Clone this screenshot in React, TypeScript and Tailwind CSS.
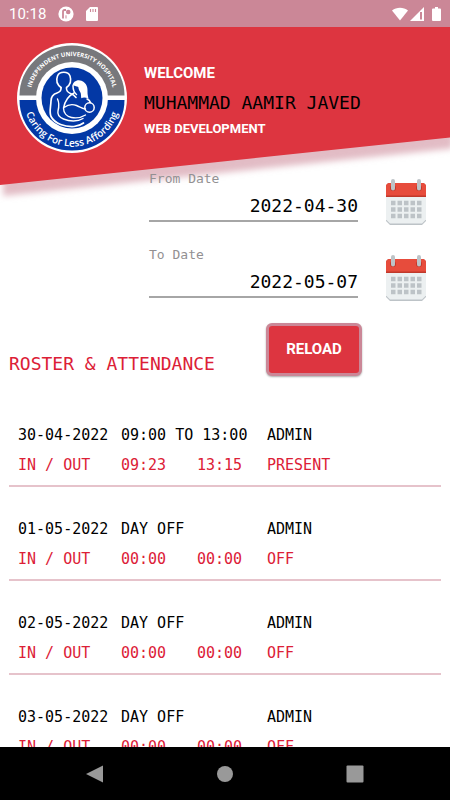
import type { ReactNode } from 'react'

type Entry = {
  date: string
  shift: string
  timeIn: string
  timeOut: string
  department: string
  status: string
}

const entries: Entry[] = [
  { date: '30-04-2022', shift: '09:00 TO 13:00', timeIn: '09:23', timeOut: '13:15', department: 'ADMIN', status: 'PRESENT' },
  { date: '01-05-2022', shift: 'DAY OFF', timeIn: '00:00', timeOut: '00:00', department: 'ADMIN', status: 'OFF' },
  { date: '02-05-2022', shift: 'DAY OFF', timeIn: '00:00', timeOut: '00:00', department: 'ADMIN', status: 'OFF' },
  { date: '03-05-2022', shift: 'DAY OFF', timeIn: '00:00', timeOut: '00:00', department: 'ADMIN', status: 'OFF' },
]

function StatusBar() {
  return (
    <div className="flex h-[27px] shrink-0 items-center justify-between bg-[#cb8797] px-[9px] font-[Roboto,sans-serif] text-[15px] text-white">
      <div className="flex items-center gap-3">
        <span className="mt-px">10:18</span>
        <svg width="16" height="16" viewBox="0 0 16 16" aria-hidden="true">
          <circle cx="8" cy="8" r="7.6" fill="#fff" />
          <path d="M5 12.500V5.500q0-1.500 1.500-1.500H8" fill="none" stroke="#cb8797" strokeWidth="1.800" />
          <path d="M8 9.300V12.500" fill="none" stroke="#cb8797" strokeWidth="1" />
          <circle cx="10.200" cy="6" r="2.300" fill="#cb8797" />
        </svg>
        <svg width="12" height="14" viewBox="0 0 12 14" aria-hidden="true">
          <path d="M4 0h7a1 1 0 0 1 1 1v12a1 1 0 0 1-1 1H1a1 1 0 0 1-1-1V4z" fill="#fff" />
          <path d="M4.500 2v3M7 2v3M9.500 2v3" stroke="#cb8797" strokeWidth="1.100" />
        </svg>
      </div>
      <div className="flex items-center">
        <svg width="16" height="14" viewBox="0 0 17 14" aria-hidden="true">
          <path d="M0 3.400C4.800-.6 12.200-.6 17 3.400L8.500 14z" fill="#fff" />
        </svg>
        <svg className="ml-0.5" width="14" height="14" viewBox="0 0 14 14" aria-hidden="true">
          <path d="M14 0v14H0z" fill="#fff" />
          <path d="M11 5v7.500" stroke="#cb8797" strokeWidth="2" />
        </svg>
        <svg className="ml-2" width="9" height="14" viewBox="0 0 9 14" aria-hidden="true">
          <path d="M3 0h3v1.500h2a1 1 0 0 1 1 1V13a1 1 0 0 1-1 1H1a1 1 0 0 1-1-1V2.500a1 1 0 0 1 1-1h2z" fill="#fff" />
        </svg>
      </div>
    </div>
  )
}

function HospitalLogo() {
  return (
    <svg className="shrink-0" width="110" height="110" viewBox="0 0 110 110" role="img" aria-label="Independent University Hospital">
      <defs>
        <path id="arc-top" d="M13 55a42 42 0 0 1 84 0" />
        <path id="arc-bottom" d="M6.500 55a48.500 48.500 0 0 0 97 0" />
      </defs>
      <circle cx="55" cy="55" r="55" fill="#fff" />
      <path d="M2.500 52.500a52.500 50 0 0 1 105 0z" fill="#77787c" />
      <path d="M2.500 57a52.500 50.500 0 0 0 105 0z" fill="#0338a5" />
      <circle cx="55" cy="55" r="36" fill="#fff" />
      <circle cx="55" cy="55" r="30.500" fill="#0338a5" />
      <g fill="none" stroke="#fff" strokeLinecap="round" strokeLinejoin="round">
        <path
          d="M44 44.500c-4-3-5-7.500-3.500-11.500 2-4.800 10.500-5 12.500 0 1.500 4.500 0 9-3.500 11.500-.5 3 .5 4.500 4 6 2 .8 4 2 5.500 4"
          strokeWidth="1.600"
        />
        <path d="M44 44.500c.5 3-1 4.500-4 5.500-4.500 1.400-6 3.500-6 8-.2 6-2 11 0 15.500 4 7.500 14 10.500 23 10 4-.5 7-1.500 9.500-3.500" strokeWidth="1.700" />
        <path d="M40.500 56c2 4 1.500 8 .5 12s2 6.500 5.500 8c6 2.600 14 3 19.500-.5" strokeWidth="1.400" />
        <path d="M57 50c-5 2.500-9 7.500-10.500 15M47 64.500c4-3 8.500-3.500 12.500-2 3.500 1.300 6 3.500 9 3.500M46.500 65c0 5 3.500 8.500 8 9.500 5 1 10 0 14-2.500" strokeWidth="1.400" />
        <circle cx="72.500" cy="64.500" r="4.700" strokeWidth="1.500" />
        <path d="M56 43c0 4 1 6.500 3.500 8.500M70 56c2.500 1 3 2 3.500 3.500" strokeWidth="1.500" />
      </g>
      <path d="M55.500 43c0-4.500 5-7 9-5.300 5.500 2.300 6.200 7.300 6 11-.1 3 .8 5.300 1 7.300-2.500-1.600-5-1.800-7.200-.8-.5-2.700 0-4.200-1-6-1.300-2-1.800-3.200-2-5.200-2-.5-4-1.500-5.800-1z" fill="#fff" />
      <text fill="#fff" className="font-['Open_Sans',sans-serif] text-[6px] font-bold">
        <textPath href="#arc-top" startOffset="50%" textAnchor="middle">INDEPENDENT UNIVERSITY HOSPITAL</textPath>
      </text>
      <text fill="#fff" className="font-['Open_Sans',sans-serif] text-[10px] font-semibold">
        <textPath href="#arc-bottom" startOffset="50%" textAnchor="middle">Caring For Less Affording</textPath>
      </text>
    </svg>
  )
}

function CalendarIcon() {
  return (
    <svg width="40" height="46" viewBox="0 0 40 46" aria-hidden="true">
      <path d="M0 20h40v22l-4 4H4l-4-4z" fill="#bdc3c7" />
      <path d="M0 16h40v24.500l-4 4H4l-4-4z" fill="#ecf0f1" />
      <path d="M0 8q0-4 4-4h32q4 0 4 4v10H0z" fill="#c0392b" />
      <path d="M0 8q0-4 4-4h32q4 0 4 4v8.500H0z" fill="#e74c3c" />
      <circle cx="7" cy="9" r="3" fill="#c0392b" />
      <circle cx="33" cy="9" r="3" fill="#c0392b" />
      <path d="M7 2v7.500M33 2v7.500" stroke="#bdc3c7" strokeWidth="4" strokeLinecap="round" />
      {[24, 30.5, 37].map((y) => (
        <path key={y} d={`M5 ${y}h30.500`} stroke="#bdc3c7" strokeWidth="4.500" strokeDasharray="4.500 2" />
      ))}
    </svg>
  )
}

function DateField({ id, label, value }: { id: string; label: string; value: string }) {
  return (
    <div className="flex items-start justify-end pr-6">
      <div className="flex w-[209px] flex-col">
        <label htmlFor={id} className="text-[13px] leading-4 text-[#929092]">{label}</label>
        <input
          id={id}
          type="text"
          readOnly
          defaultValue={value}
          className="mt-1 h-[31px] w-full border-b-2 border-[#a6a6a6] bg-transparent text-right text-[18px] text-black outline-none"
        />
      </div>
      <button type="button" aria-label={`Pick ${label.toLowerCase()}`} className="ml-7 mt-2">
        <CalendarIcon />
      </button>
    </div>
  )
}

function NavButton({ label, children }: { label: string; children: ReactNode }) {
  return (
    <button type="button" aria-label={label} className="flex h-12 w-12 items-center justify-center">
      <svg width="18" height="18" viewBox="0 0 18 18" fill="#999" aria-hidden="true">{children}</svg>
    </button>
  )
}

export default function App() {
  return (
    <div className="flex h-screen flex-col overflow-hidden bg-white font-['Droid_Sans_Mono','DejaVu_Sans_Mono',monospace]">
      <StatusBar />

      <div className="min-h-0 flex-1 overflow-hidden">
        <header className="relative isolate h-[158px]">
          <div className="absolute inset-0 -z-10 drop-shadow-[3px_11px_3px_#cb87978f]">
            <div className="h-full bg-[#dd3540] [clip-path:polygon(0_0,100%_0,100%_70%,0_100%)]" />
          </div>
          <div className="flex gap-[17px] pl-[17px] pt-4">
            <HospitalLogo />
            <div className="pt-5 font-[Roboto,sans-serif] font-bold text-white">
              <p className="text-[15px] leading-5">WELCOME</p>
              <h1 className="mt-2 font-['Droid_Sans_Mono','DejaVu_Sans_Mono',monospace] text-[18px] font-normal leading-6 text-black">
                MUHAMMAD AAMIR JAVED
              </h1>
              <p className="mt-1.5 text-[13px] leading-4">WEB DEVELOPMENT</p>
            </div>
          </div>
        </header>

        <main className="relative -mt-[14px]">
          <div className="flex flex-col gap-[22px]">
            <DateField id="from-date" label="From Date" value="2022-04-30" />
            <DateField id="to-date" label="To Date" value="2022-05-07" />
          </div>

          <div className="mt-[22px] flex items-end pl-[9px]">
            <h2 className="w-[257px] text-[18px] leading-6 text-[#dc2036]">ROSTER &amp; ATTENDANCE</h2>
            <button
              type="button"
              className="h-[53px] w-24 rounded-md border-[3px] border-[#cb8797] bg-[#dd3540] font-[Roboto,sans-serif] text-[15px] font-bold text-white shadow-[0_1px_2px_#0005]"
            >
              RELOAD
            </button>
          </div>

          <div className="mt-[17px] px-[9px]">
            <table className="w-full table-fixed border-collapse text-left text-[15px] leading-[30px]">
              <colgroup>
                <col className="w-[112px]" />
                <col className="w-[76px]" />
                <col className="w-[70px]" />
                <col />
              </colgroup>
              {entries.map((entry) => (
                <tbody key={entry.date} className="border-b-2 border-[#e6c3cb]">
                  <tr className="text-black">
                    <th scope="row" className="pl-[9px] pt-[27px] font-normal">{entry.date}</th>
                    <td colSpan={2} className="whitespace-nowrap pt-[27px]">{entry.shift}</td>
                    <td className="pt-[27px]">{entry.department}</td>
                  </tr>
                  <tr className="text-[#dc2036]">
                    <th scope="row" className="pb-[5px] pl-[9px] font-normal">IN / OUT</th>
                    <td className="pb-[5px]">{entry.timeIn}</td>
                    <td className="pb-[5px]">{entry.timeOut}</td>
                    <td className="pb-[5px]">{entry.status}</td>
                  </tr>
                </tbody>
              ))}
            </table>
          </div>
        </main>
      </div>

      <nav className="flex h-[53px] shrink-0 items-center justify-center gap-[82px] bg-black">
        <NavButton label="Back">
          <path d="M17 .5v17L0 9z" />
        </NavButton>
        <NavButton label="Home">
          <circle cx="9" cy="9" r="8" />
        </NavButton>
        <NavButton label="Recent apps">
          <rect x=".5" y=".5" width="17" height="17" rx="1" />
        </NavButton>
      </nav>
    </div>
  )
}
